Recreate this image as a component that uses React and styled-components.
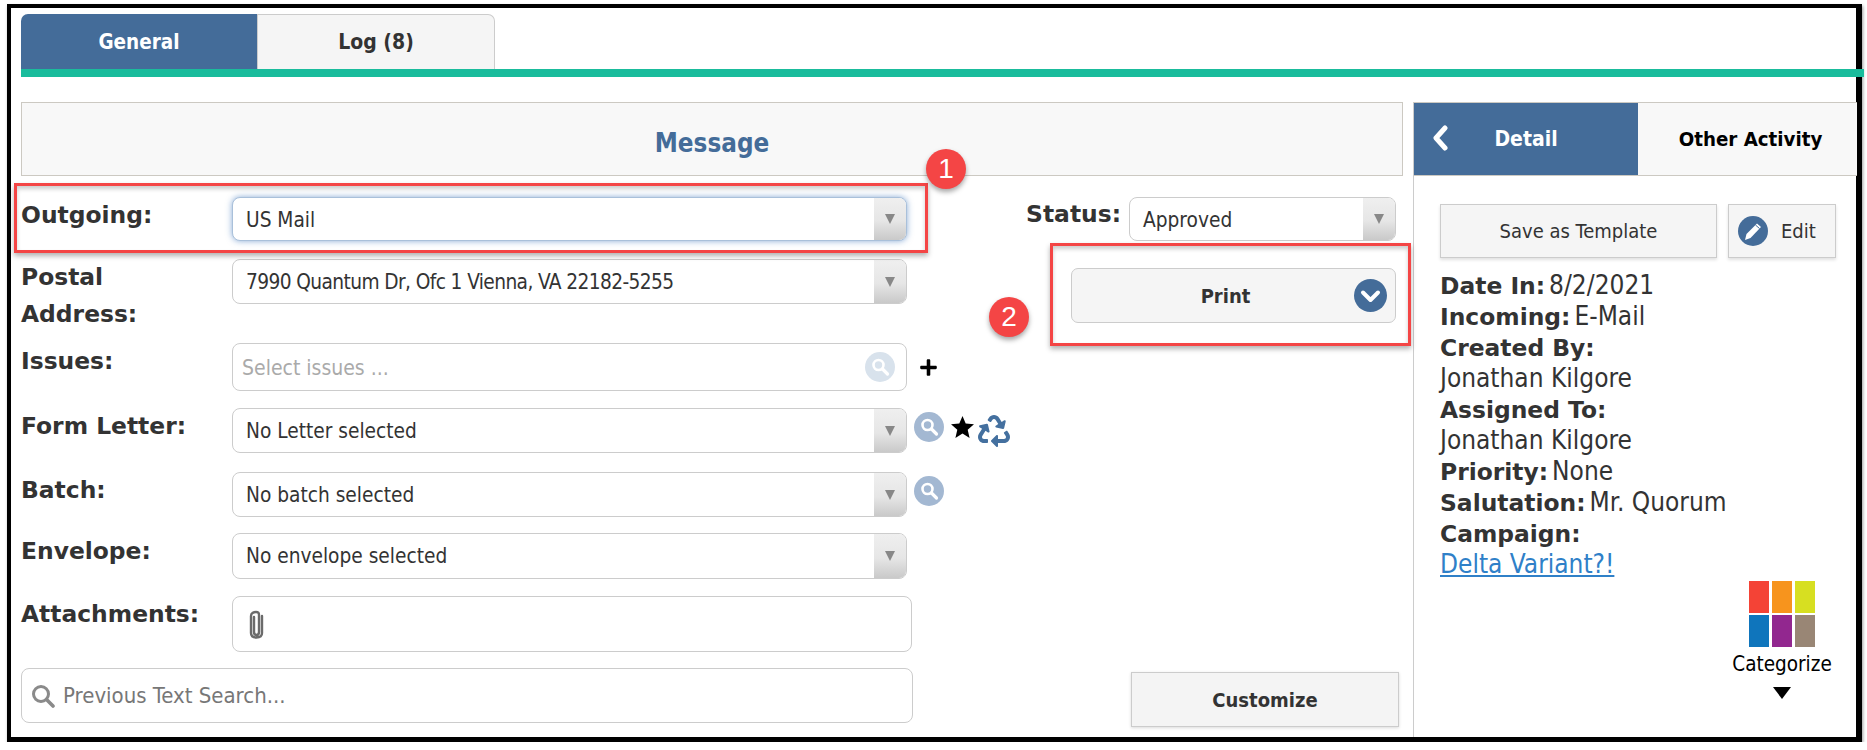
import React from "react";
import styled, { createGlobalStyle } from "styled-components";
import { FaRecycle, FaPlus } from "react-icons/fa";

const Global = createGlobalStyle`
  html, body { margin: 0; padding: 0; background: #fff; }
  body {
    font-family: "DejaVu Sans Condensed", "DejaVu Sans", sans-serif;
    font-stretch: condensed;
    color: #333;
  }
`;

const Frame = styled.div`
  position: relative;
  box-sizing: border-box;
  width: 1855px;
  height: 738px;
  margin: 4px 0 0 7px;
  padding: 6px 0 0 10px;
  border: solid #000;
  border-width: 4px 6px 5px 4px;
  box-shadow: 1px 2px 3px rgba(0, 0, 0, 0.4);
`;

const TabBar = styled.div`
  display: flex;
  height: 55px;
  margin-right: -8px;
  border-bottom: 8px solid #1abc9c;
  box-sizing: content-box;
`;

const Tab = styled.div`
  display: flex;
  align-items: center;
  justify-content: center;
  box-sizing: border-box;
  width: ${({ $active }) => ($active ? 236 : 238)}px;
  font-size: ${({ $active }) => ($active ? 20.5 : 21)}px;
  font-weight: 700;
  color: ${({ $active }) => ($active ? "#fff" : "#333")};
  background: ${({ $active }) => ($active ? "#446c99" : "#f5f5f5")};
  border: ${({ $active }) => ($active ? "0" : "1px solid #ccc")};
  border-bottom: 0;
  border-radius: ${({ $active }) => ($active ? "7px 0 0 0" : "0 7px 0 0")};
`;

const Main = styled.div`
  display: flex;
  margin-top: 25px;
  height: 635px;
`;

const LeftSection = styled.section`
  width: 1382px;
  flex: none;
`;

const Header = styled.div`
  display: flex;
  align-items: center;
  justify-content: center;
  box-sizing: border-box;
  height: 74px;
  padding-top: 8px;
  background: #f8f8f8;
  border: 1px solid #ccc9c2;
  font-size: 25.8px;
  font-weight: 700;
  color: #446c99;
`;

const Body = styled.div`
  display: flex;
  padding-top: 21px;
`;

const FormColumn = styled.div`
  width: 892px;
  flex: none;
`;

const Row = styled.div`
  display: flex;
  align-items: flex-start;
  margin-top: ${({ $gap }) => $gap || 0}px;
`;

const Label = styled.label`
  width: 211px;
  flex: none;
  margin-top: 0;
  box-sizing: border-box;
  font-family: "DejaVu Sans", sans-serif;
  font-stretch: normal;
  font-size: 23.4px;
  line-height: 37px;
  font-weight: 700;
  color: #333;
`;

const SelectBox = styled.div`
  display: flex;
  box-sizing: border-box;
  width: ${({ $width }) => $width || 675}px;
  height: ${({ $height }) => $height || 45}px;
  flex: none;
  background: #fff;
  border: 1px solid ${({ $focus }) => ($focus ? "#a9c0da" : "#ccc")};
  border-radius: 8px;
  box-shadow: ${({ $focus }) =>
    $focus ? "0 0 6px rgba(70, 125, 190, 0.65)" : "none"};
  overflow: hidden;
`;

const SelectText = styled.span`
  flex: 1;
  padding-left: 13px;
  font-size: 20.7px;
  line-height: 45px;
  letter-spacing: ${({ $tight }) => ($tight ? "-0.6px" : "0")};
  color: #333;
  white-space: nowrap;
`;

const ArrowCell = styled.span`
  display: flex;
  align-items: center;
  justify-content: center;
  width: 32px;
  flex: none;
  background: linear-gradient(#efefef, #e6e6e6 55%, #c9c9c9);
  &::after {
    content: "";
    border: solid transparent;
    border-width: 10px 5.5px 0;
    border-top-color: #888;
  }
`;

const InputBox = styled.div`
  display: flex;
  align-items: center;
  box-sizing: border-box;
  width: ${({ $width }) => $width}px;
  height: ${({ $height }) => $height}px;
  flex: none;
  background: #fff;
  border: 1px solid #ccc;
  border-radius: 8px;
`;

const Placeholder = styled.span`
  flex: 1;
  padding-left: ${({ $inset }) => $inset}px;
  padding-top: ${({ $soft }) => ($soft ? 2 : 0)}px;
  font-size: ${({ $soft }) => ($soft ? 21 : 22)}px;
  color: ${({ $soft }) => ($soft ? "#aaa" : "#777")};
  white-space: nowrap;
`;

const ClipSlot = styled.span`
  display: flex;
  padding-left: 16px;
`;

const LeadingIcon = styled.span`
  display: flex;
  padding-left: 9px;
`;

const TrailingIcon = styled.span`
  display: flex;
  padding-right: 11px;
`;

const SideIcons = styled.div`
  display: flex;
  align-items: center;
  flex: none;
  gap: ${({ $gap }) => $gap || 7}px;
  height: 38px;
  margin-left: ${({ $left }) => $left}px;
  margin-top: ${({ $top }) => $top || 0}px;
`;

const RecycleMark = styled(FaRecycle)`
  margin: 8px 0 0 -3px;
  color: #44709f;
`;

const StatusColumn = styled.div`
  display: flex;
  flex-direction: column;
  align-items: flex-end;
  flex: 1;
  padding-right: 7px;
`;

const StatusRow = styled.div`
  display: flex;
  align-items: flex-start;
  gap: 8px;
`;

const StatusLabel = styled.span`
  font-family: "DejaVu Sans", sans-serif;
  font-stretch: normal;
  font-size: 23.4px;
  line-height: 37px;
  font-weight: 700;
  margin-top: -1px;
`;

const PrintButton = styled.button`
  position: relative;
  display: flex;
  align-items: center;
  justify-content: center;
  box-sizing: border-box;
  width: 325px;
  height: 55px;
  margin-top: 27px;
  padding: 0 16px 0 0;
  font: inherit;
  font-size: 20px;
  font-weight: 700;
  color: #333;
  background: #f5f5f5;
  border: 1px solid #ccc;
  border-radius: 7px;
`;

const ChevronDot = styled.span`
  position: absolute;
  right: 8px;
  top: 10px;
  display: flex;
`;

const CustomizeButton = styled.button`
  box-sizing: border-box;
  width: 268px;
  height: 55px;
  margin: 349px -3px 0 0;
  padding: 0;
  font: inherit;
  font-size: 20px;
  font-weight: 700;
  color: #333;
  background: #f4f4f4;
  border: 1px solid #ccc;
  box-shadow: 0 1px 3px rgba(0, 0, 0, 0.15);
`;

const DetailPanel = styled.aside`
  flex: 1;
  margin-left: 10px;
  border-left: 1px solid #ccc;
  border-top: 1px solid #ccc9c2;
`;

const PanelTabs = styled.div`
  display: flex;
  height: 72px;
  border-bottom: 1px solid #ccc9c2;
  background: #f8f8f8;
`;

const PanelTab = styled.div`
  position: relative;
  display: flex;
  align-items: center;
  justify-content: center;
  box-sizing: border-box;
  width: ${({ $active }) => ($active ? 224 : 218)}px;
  padding-left: ${({ $active }) => ($active ? 0 : 7)}px;
  font-size: ${({ $active }) => ($active ? 21 : 20.3)}px;
  font-weight: 700;
  color: ${({ $active }) => ($active ? "#fff" : "#000")};
  background: ${({ $active }) => ($active ? "#446c99" : "transparent")};
`;

const BackChevron = styled.span`
  position: absolute;
  left: 18px;
  top: 22px;
  display: flex;
`;

const PanelBody = styled.div`
  padding: 28px 20px 0 26px;
`;

const ButtonRow = styled.div`
  display: flex;
  gap: 11px;
`;

const GhostButton = styled.div`
  display: flex;
  align-items: center;
  justify-content: ${({ $lead }) => ($lead ? "flex-start" : "center")};
  gap: 13px;
  box-sizing: border-box;
  width: ${({ $width }) => $width}px;
  height: 54px;
  padding-left: ${({ $lead }) => ($lead ? 9 : 0)}px;
  font-size: 20px;
  color: #333;
  background: #f5f5f5;
  border: 1px solid #ccc;
  box-shadow: 0 2px 3px rgba(0, 0, 0, 0.12);
`;

const Facts = styled.div`
  margin-top: 12px;
  font-size: 26px;
  color: #333;
`;

const Fact = styled.div`
  height: 31px;
  line-height: 31px;
  white-space: nowrap;
  b {
    font-family: "DejaVu Sans", sans-serif;
    font-stretch: normal;
    font-size: 23.4px;
    font-weight: 700;
    margin-right: 4px;
  }
`;

const FactLink = styled.a`
  color: #2f80c8;
  text-decoration: underline;
`;

const Categorize = styled.div`
  display: flex;
  flex-direction: column;
  align-items: center;
  width: 110px;
  margin: 1px 0 0 287px;
  font-size: 20.5px;
  color: #000;
`;

const Swatches = styled.div`
  display: grid;
  grid-template-columns: repeat(3, 20px);
  grid-template-rows: repeat(2, 32px);
  gap: 2px 3px;
  margin-bottom: 5px;
`;

const Swatch = styled.span`
  background: ${({ $color }) => $color};
`;

const DownTriangle = styled.span`
  margin-top: 11px;
  border: solid transparent;
  border-width: 12px 9px 0;
  border-top-color: #000;
`;

/* annotations painted over the form */
const RedBox = styled.div`
  position: absolute;
  box-sizing: border-box;
  left: ${({ $x }) => $x}px;
  top: ${({ $y }) => $y}px;
  width: ${({ $w }) => $w}px;
  height: ${({ $h }) => $h}px;
  border: 3px solid #f44545;
  box-shadow: 0 3px 5px rgba(0, 0, 0, 0.3), inset 0 3px 4px rgba(0, 0, 0, 0.2);
  pointer-events: none;
`;

const Badge = styled.div`
  position: absolute;
  left: ${({ $x }) => $x}px;
  top: ${({ $y }) => $y}px;
  display: flex;
  align-items: center;
  justify-content: center;
  width: 40px;
  height: 40px;
  border-radius: 50%;
  background: #f44545;
  color: #fff;
  font-family: "Liberation Sans", sans-serif;
  font-size: 28px;
  font-stretch: normal;
  box-shadow: 0 3px 5px rgba(0, 0, 0, 0.35);
`;

const SearchDot = ({ color }) => (
  <svg width="30" height="30" viewBox="0 0 30 30">
    <circle cx="15" cy="15" r="15" fill={color} />
    <circle cx="13.5" cy="13" r="5" fill="none" stroke="#fff" strokeWidth="2.6" />
    <path d="M17.5 17l5 5" stroke="#fff" strokeWidth="3.2" strokeLinecap="round" />
  </svg>
);

const StarMark = () => (
  <svg width="23" height="22" viewBox="0 0 23 22">
    <polygon points="11.5,0 14.7,7.6 23,8.3 16.700,13.700 18.600,22 11.5,17.600 4.400,22 6.300,13.700 0,8.300 8.300,7.600" fill="#000" />
  </svg>
);

const Paperclip = () => (
  <svg width="15" height="29" viewBox="0 0 15 29" fill="none">
    <path
      d="M5 7v15c0 2 1 3 2.500 3s2.500-1 2.500-3V5C10 3 9 2 7 2S2 3 2 6v17c0 3 2 4.500 5.500 4.500S13 26 13 23V6"
      stroke="#6b6b6b"
      strokeWidth="2.4"
      strokeLinecap="round"
    />
  </svg>
);

const SearchGlass = () => (
  <svg width="24" height="24" viewBox="0 0 24 24" fill="none">
    <circle cx="10" cy="10" r="7.500" stroke="#8a8a8a" strokeWidth="3" />
    <path d="M15.500 15.500L22 22" stroke="#8a8a8a" strokeWidth="3.600" strokeLinecap="round" />
  </svg>
);

const PrintChevron = () => (
  <svg width="33" height="33" viewBox="0 0 33 33" fill="none">
    <circle cx="16.500" cy="16.500" r="16.500" fill="#446c99" />
    <path d="M9 13.500l7.500 7.500 7.500-7.500" stroke="#fff" strokeWidth="4" strokeLinecap="round" strokeLinejoin="round" />
  </svg>
);

const LeftChevron = () => (
  <svg width="17" height="26" viewBox="0 0 17 26" fill="none">
    <path d="M13 3L4 13l9 10" stroke="#fff" strokeWidth="5" strokeLinecap="round" strokeLinejoin="round" />
  </svg>
);

const PencilDot = () => (
  <svg width="30" height="30" viewBox="0 0 30 30">
    <circle cx="15" cy="15" r="15" fill="#446c99" />
    <path d="M7 24l1.500-6L19 7.500l4 3.500L12.500 22z" fill="#fff" />
    <path d="M17.500 9l4 3.500" stroke="#446c99" strokeWidth="1" />
  </svg>
);

const Select = ({ children, focus, width, height, tight }) => (
  <SelectBox $focus={focus} $width={width} $height={height}>
    <SelectText $tight={tight}>{children}</SelectText>
    <ArrowCell />
  </SelectBox>
);

const swatches = ["#f44336", "#f7941d", "#d7df21", "#0f75bc", "#92278f", "#998675"];

export default function App() {
  return (
    <Frame>
      <Global />
      <TabBar>
        <Tab $active>General</Tab>
        <Tab>Log (8)</Tab>
      </TabBar>
      <Main>
        <LeftSection>
          <Header>Message</Header>
          <Body>
            <FormColumn>
              <Row>
                <Label>Outgoing:</Label>
                <Select focus height={44}>US Mail</Select>
              </Row>
              <Row $gap={18}>
                <Label>Postal<br />Address:</Label>
                <Select tight>7990 Quantum Dr, Ofc 1 Vienna, VA 22182-5255</Select>
              </Row>
              <Row $gap={10}>
                <Label>Issues:</Label>
                <InputBox $width={675} $height={48}>
                  <Placeholder $inset={9} $soft>Select issues ...</Placeholder>
                  <TrailingIcon><SearchDot color="#d8e2ec" /></TrailingIcon>
                </InputBox>
                <SideIcons $left={12} $top={5}>
                  <FaPlus size={19} color="#000" />
                </SideIcons>
              </Row>
              <Row $gap={17}>
                <Label>Form Letter:</Label>
                <Select>No Letter selected</Select>
                <SideIcons $left={7} $gap={7}>
                  <SearchDot color="#a3b8d2" />
                  <StarMark />
                  <RecycleMark size={32} />
                </SideIcons>
              </Row>
              <Row $gap={19}>
                <Label>Batch:</Label>
                <Select>No batch selected</Select>
                <SideIcons $left={7}>
                  <SearchDot color="#a3b8d2" />
                </SideIcons>
              </Row>
              <Row $gap={16}>
                <Label>Envelope:</Label>
                <Select height={46}>No envelope selected</Select>
              </Row>
              <Row $gap={17}>
                <Label>Attachments:</Label>
                <InputBox $width={680} $height={56}>
                  <ClipSlot><Paperclip /></ClipSlot>
                </InputBox>
              </Row>
              <Row $gap={16}>
                <InputBox $width={892} $height={55}>
                  <LeadingIcon><SearchGlass /></LeadingIcon>
                  <Placeholder $inset={8}>Previous Text Search...</Placeholder>
                </InputBox>
              </Row>
            </FormColumn>
            <StatusColumn>
              <StatusRow>
                <StatusLabel>Status:</StatusLabel>
                <Select width={267} height={44}>Approved</Select>
              </StatusRow>
              <PrintButton>
                Print
                <ChevronDot><PrintChevron /></ChevronDot>
              </PrintButton>
              <CustomizeButton>Customize</CustomizeButton>
            </StatusColumn>
          </Body>
        </LeftSection>
        <DetailPanel>
          <PanelTabs>
            <PanelTab $active>
              <BackChevron><LeftChevron /></BackChevron>
              Detail
            </PanelTab>
            <PanelTab>Other Activity</PanelTab>
          </PanelTabs>
          <PanelBody>
            <ButtonRow>
              <GhostButton $width={277}>Save as Template</GhostButton>
              <GhostButton $width={108} $lead>
                <PencilDot />
                Edit
              </GhostButton>
            </ButtonRow>
            <Facts>
              <Fact><b>Date In:</b>8/2/2021</Fact>
              <Fact><b>Incoming:</b>E-Mail</Fact>
              <Fact><b>Created By:</b></Fact>
              <Fact>Jonathan Kilgore</Fact>
              <Fact><b>Assigned To:</b></Fact>
              <Fact>Jonathan Kilgore</Fact>
              <Fact><b>Priority:</b>None</Fact>
              <Fact><b>Salutation:</b>Mr. Quorum</Fact>
              <Fact><b>Campaign:</b></Fact>
              <Fact><FactLink href="#delta">Delta Variant?!</FactLink></Fact>
            </Facts>
            <Categorize>
              <Swatches>
                {swatches.map((c) => <Swatch key={c} $color={c} />)}
              </Swatches>
              Categorize
              <DownTriangle />
            </Categorize>
          </PanelBody>
        </DetailPanel>
      </Main>
      <RedBox $x={3} $y={175} $w={914} $h={70} />
      <RedBox $x={1039} $y={235} $w={361} $h={103} />
      <Badge $x={915} $y={141}>1</Badge>
      <Badge $x={978} $y={289}>2</Badge>
    </Frame>
  );
}
